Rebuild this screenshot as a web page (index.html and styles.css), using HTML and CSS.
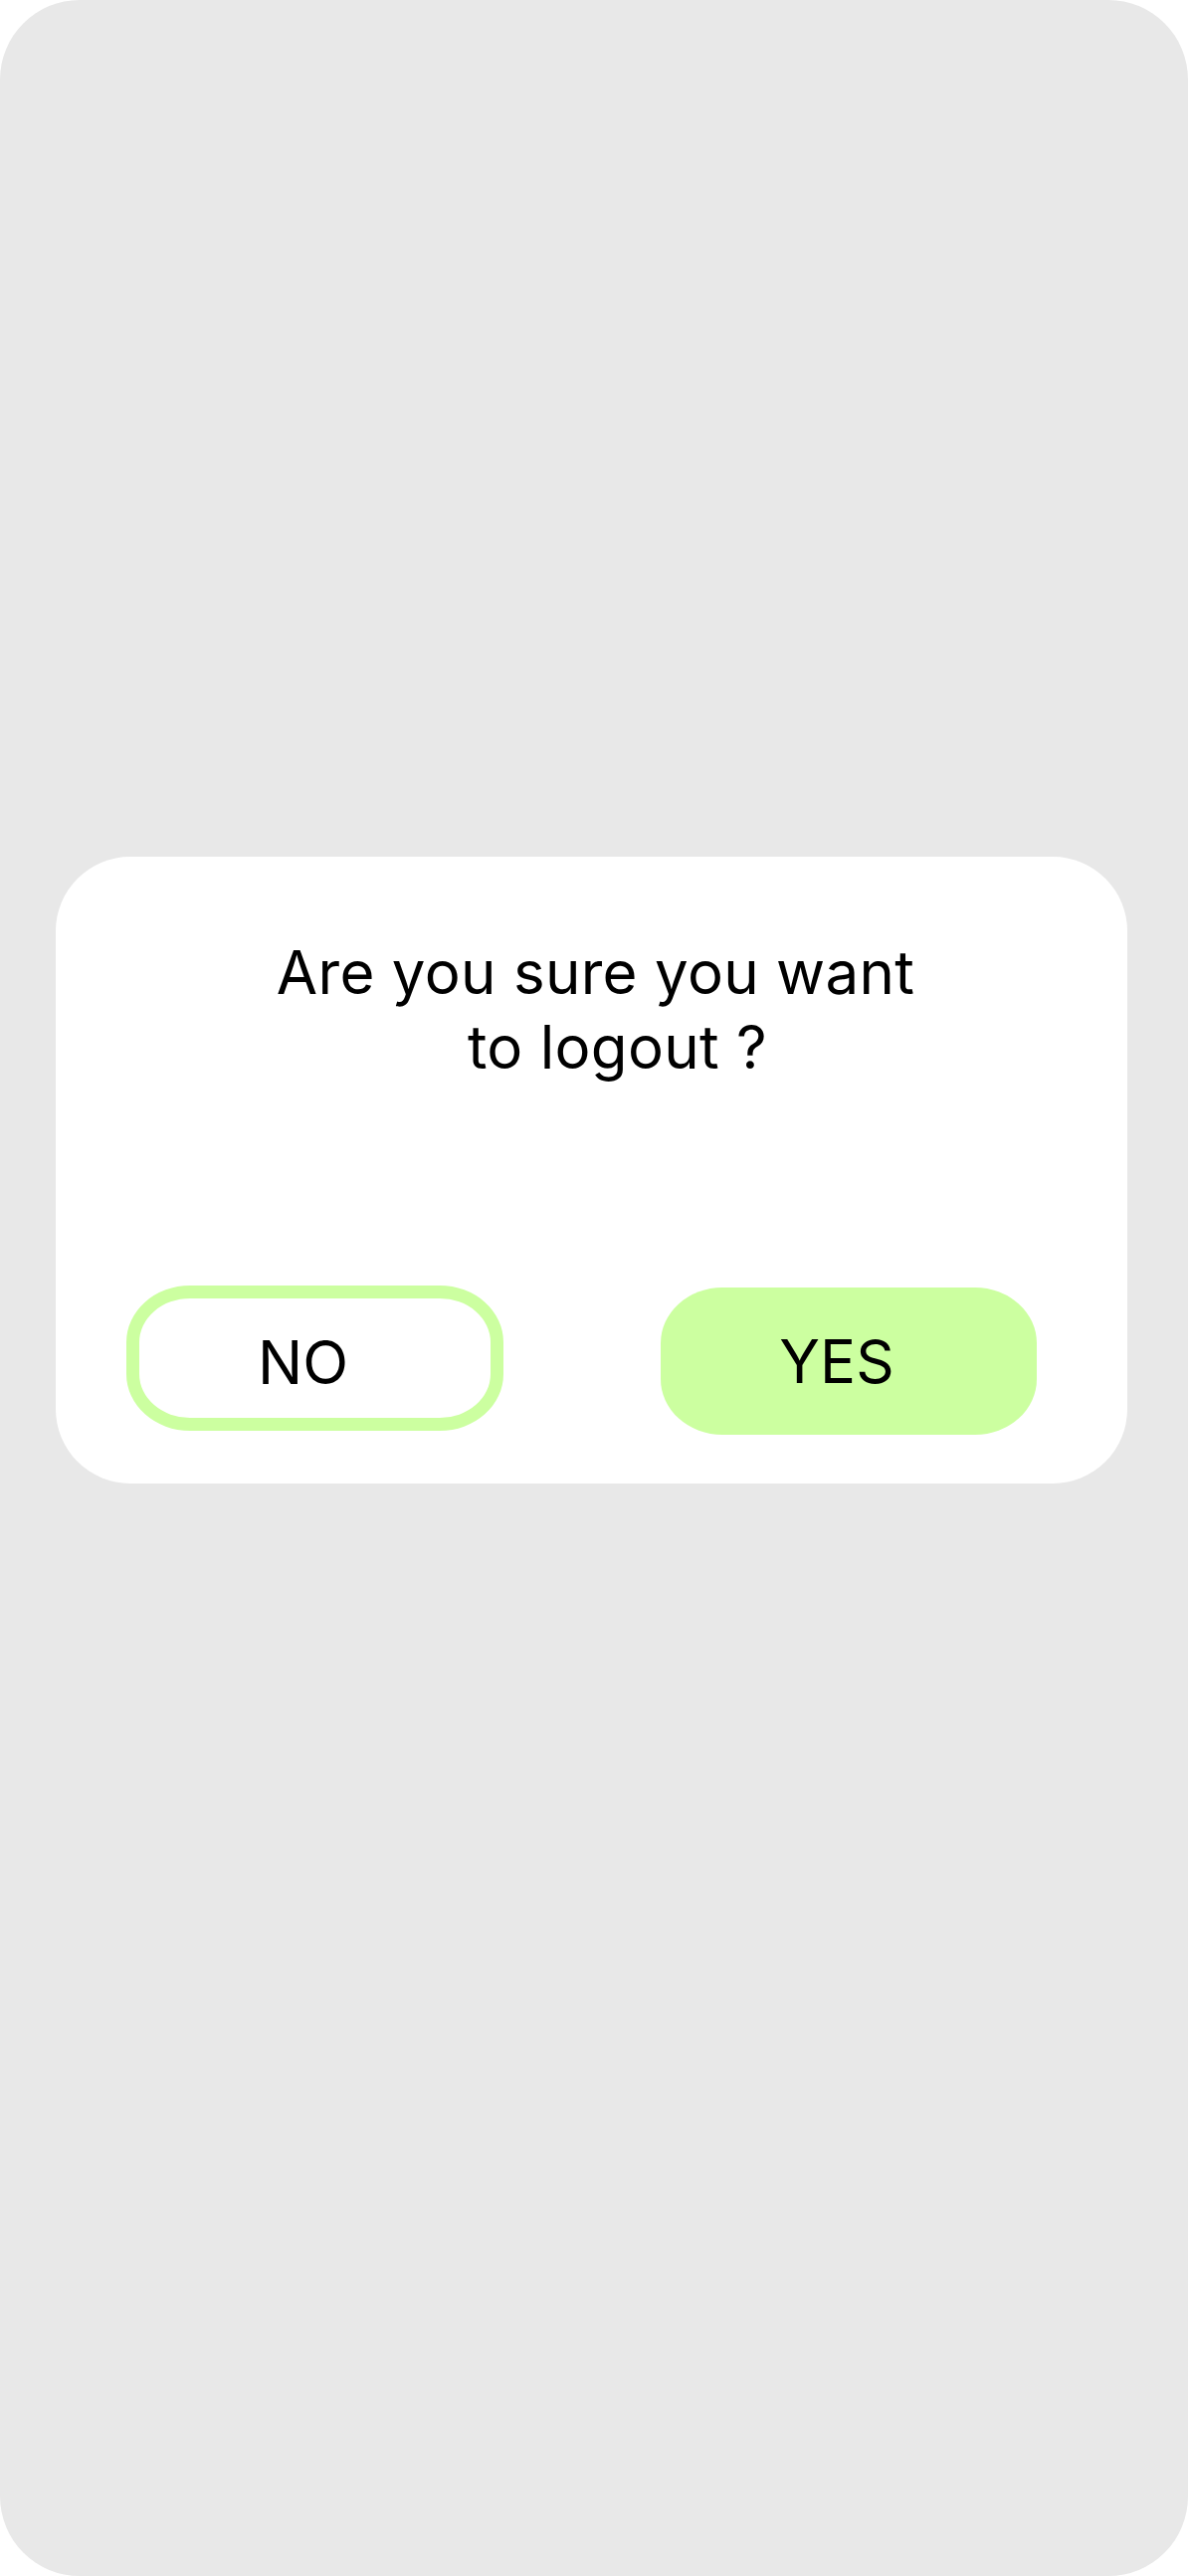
FILE: index.html
```html
<!DOCTYPE html>
<html lang="en">
<head>
<meta charset="utf-8">
<title>Logout</title>
<link rel="stylesheet" href="styles.css">
</head>
<body>
<div class="screen">
  <div class="dialog">
    <p class="question">Are you sure you want<br><span class="line2">to logout ?</span></p>
    <div class="actions">
      <button class="btn btn-no">NO</button>
      <button class="btn btn-yes">YES</button>
    </div>
  </div>
</div>
</body>
</html>
```
FILE: styles.css
```css
html, body {
  margin: 0;
  padding: 0;
  background: #ffffff;
}
body {
  font-family: Inter, "Noto Sans", "Liberation Sans", sans-serif;
  color: #000;
}
.screen {
  width: 1194px;
  height: 2589px;
  background: #e8e8e8;
  border-radius: 80px;
  padding-top: 861px;
  padding-left: 56px;
  box-sizing: border-box;
}
.dialog {
  width: 1077px;
  height: 630px;
  background: #ffffff;
  border-radius: 75px;
  box-sizing: border-box;
  padding: 79px 0 49px 0;
  display: flex;
  flex-direction: column;
  justify-content: space-between;
}
.question {
  margin: 0;
  font-size: 60px;
  line-height: 75px;
  letter-spacing: 0.3px;
  font-weight: 400;
  text-align: center;
  padding-left: 8px;
}
.line2 {
  padding-left: 44px;
}
.actions {
  display: flex;
  align-items: center;
  justify-content: space-between;
  padding: 0 91px 0 71px;
}
.btn {
  font-family: Inter, "Noto Sans", "Liberation Sans", sans-serif;
  font-size: 60px;
  font-weight: 400;
  color: #000;
  box-sizing: border-box;
  text-align: center;
  padding: 0 24px 0 0;
  cursor: pointer;
}
.btn-no {
  width: 379px;
  height: 146px;
  background: #ffffff;
  border: 13px solid #ccffa0;
  border-radius: 64px / 57px;
  margin-bottom: 4px;
  padding-top: 8px;
}
.btn-yes {
  width: 378px;
  height: 148px;
  background: #ccffa0;
  border: none;
  border-radius: 62px / 56px;
  margin-top: 2px;
}
```
